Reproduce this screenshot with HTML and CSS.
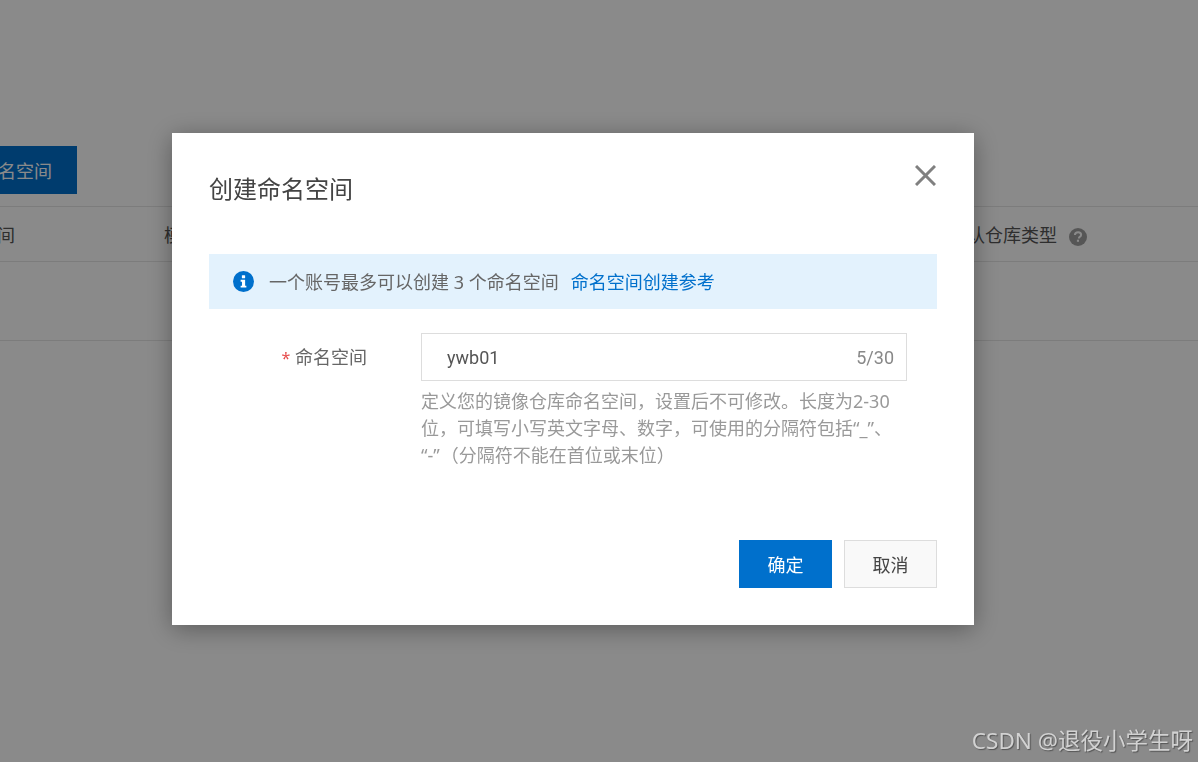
FILE: index.html
```html
<!DOCTYPE html>
<html lang="zh-CN">
<head>
<meta charset="utf-8">
<title>创建命名空间</title>
<link rel="stylesheet" href="styles.css">
</head>
<body>
<main class="page">
  <div class="toolbar"><button class="primary-action">创建命名空间</button></div>
  <div class="table-head">
    <span class="col-name">命名空间</span>
    <span class="col-mode">模式</span>
    <span class="col-type">默认仓库类型 <svg class="help" viewBox="0 0 18 18" width="18" height="18" aria-hidden="true"><circle cx="9" cy="9" r="9" fill="#a0a0a0"/><path d="M5.9 7c.1-1.8 1.4-2.8 3.2-2.8 1.7 0 3 1 3 2.5 0 1.1-.6 1.7-1.4 2.2-.6.4-.8.7-.8 1.5" fill="none" stroke="#fff" stroke-width="2"/><rect x="7.9" y="11.7" width="2.1" height="2.1" fill="#fff"/></svg></span>
  </div>
  <div class="table-row"></div>
</main>
<div class="overlay"></div>
<div class="watermark">CSDN @退役小学生呀</div>
<section class="dialog" role="dialog">
  <header class="dialog-head">
    <h1>创建命名空间</h1>
    <svg class="close" viewBox="0 0 21 21" width="21" height="21" aria-hidden="true"><path d="M1 1 20 20M20 1 1 20" stroke="#808080" stroke-width="3" fill="none"/></svg>
  </header>
  <div class="alert">
    <svg class="info" viewBox="0 0 22 22" width="21" height="21" aria-hidden="true"><circle cx="11" cy="11" r="11" fill="#0070cc"/><rect x="9.3" y="4.4" width="3.4" height="3.2" rx=".6" fill="#fff"/><path d="M8 9.2h4.7v6.2H14v2H8v-2h1.4v-4.2H8z" fill="#fff"/></svg>
    <span>一个账号最多可以创建 3 个命名空间</span>
    <a href="#">命名空间创建参考</a>
  </div>
  <div class="form-row">
    <label class="form-label"><i>*</i> 命名空间</label>
    <div class="form-field">
      <div class="input"><span>ywb01</span><span class="count">5/30</span></div>
      <p class="hint">定义您的镜像仓库命名空间，设置后不可修改。长度为2-30位，可填写小写英文字母、数字，可使用的分隔符包括“_”、“-”<span class="note">（分隔符不能在首位或末位）</span></p>
    </div>
  </div>
  <footer class="actions">
    <button class="btn btn-primary">确定</button>
    <button class="btn">取消</button>
  </footer>
</section>
</body>
</html>
```
FILE: styles.css
```css
* { box-sizing: border-box; }
html, body { margin: 0; height: 100%; overflow: hidden; }
body {
  background: #fff;
  font-family: "Noto Sans", "Noto Sans CJK SC", sans-serif;
  color: #333;
  font-size: 18px;
}
.page { padding-top: 146px; width: 1198px; }
.toolbar { height: 60px; }
.primary-action {
  display: block;
  margin-left: -81px;
  width: 158px;
  height: 48px;
  border: 0;
  background: #0070cc;
  color: #fff;
  font: inherit;
  padding: 0;
}
.table-head {
  display: grid;
  grid-template-columns: 164px 808px 1fr;
  height: 56px;
  border-top: 1px solid #e6e6e6;
  border-bottom: 1px solid #e6e6e6;
  align-items: center;
  line-height: 56px;
  color: #555;
}
.col-name { margin-left: -57px; white-space: nowrap; }
.col-type { margin-left: -23px; white-space: nowrap; display: flex; align-items: center; gap: 12px; }
.help { margin-top: 3px; }
.table-row { height: 79px; border-bottom: 1px solid #e6e6e6; }
.overlay { position: fixed; inset: 0; background: rgba(0, 0, 0, .46); }
.watermark {
  position: fixed;
  right: 5px;
  bottom: 6px;
  font-size: 22.5px;
  line-height: 30px;
  color: #d2d2d2;
  text-shadow: 1px 1px 1px #555;
  white-space: nowrap;
}
.dialog {
  position: fixed;
  left: 172px;
  top: 133px;
  width: 802px;
  height: 492px;
  padding: 0 37px;
  background: #fff;
  box-shadow: 0 4px 24px rgba(0, 0, 0, .35);
  display: flex;
  flex-direction: column;
}
.dialog-head { display: flex; justify-content: space-between; height: 121px; position: relative; }
.dialog-head h1 {
  margin: 39px 0 0;
  font-size: 24px;
  line-height: 34px;
  font-weight: 400;
  color: #444;
}
.close { position: absolute; right: 1px; top: 32px; }
.alert {
  height: 55px;
  background: #e3f2fd;
  display: flex;
  align-items: center;
  padding-left: 24px;
  padding-bottom: 1px;
  color: #666;
  white-space: nowrap;
}
.info { margin-right: 15px; flex: none; }
.alert a { color: #0070cc; text-decoration: none; margin-left: 12px; }
.form-row { display: flex; margin-top: 24px; }
.form-label {
  width: 158px;
  height: 48px;
  line-height: 48px;
  text-align: right;
  color: #666;
  flex: none;
  white-space: nowrap;
}
.form-label i { color: #e64c4c; font-style: normal; font-size: 16px; }
.form-field { margin-left: 54px; width: 486px; }
.input {
  height: 48px;
  border: 1px solid #ddd;
  display: flex;
  justify-content: space-between;
  align-items: center;
  padding: 0 12px 0 25px;
  color: #555;
  font-family: "Roboto", "Noto Sans CJK SC", sans-serif;
}
.count { color: #888; }
.hint { margin: 7px 0 0; width: 472px; line-height: 27px; color: #999; font-size: 18px; }
.note { margin-left: 10px; }
.actions { margin-top: auto; margin-bottom: 37px; display: flex; justify-content: flex-end; gap: 12px; }
.btn {
  width: 93px;
  height: 48px;
  font: inherit;
  border: 1px solid #ddd;
  background: #f9f9f9;
  color: #444;
  padding: 0;
}
.btn-primary { background: #0070cc; border-color: #0070cc; color: #fff; }
```
